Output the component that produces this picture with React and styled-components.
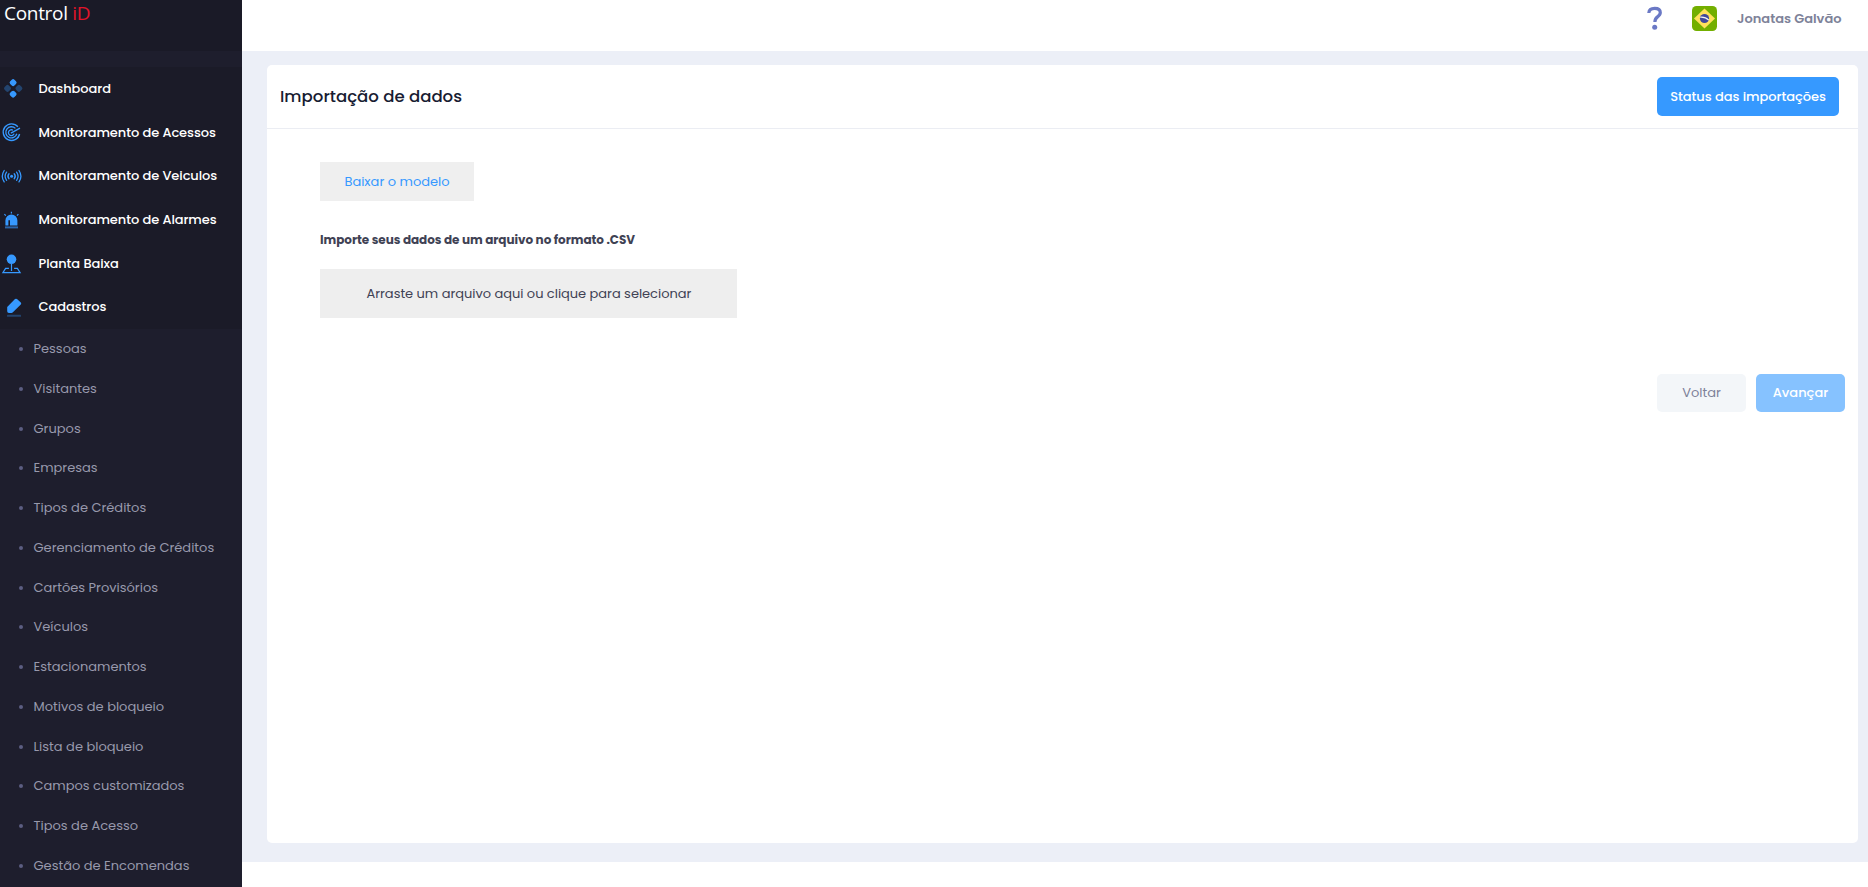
import React, { useState } from "react";
import styled, { createGlobalStyle } from "styled-components";

const colors = {
  white: "#ffffff",
  sidebar: "#1e1e2d",
  brand: "#1a1a27",
  menu: "#1b1b28",
  menuSub: "#9899ac",
  dot: "#5c5e81",
  primary: "#3699ff",
  primaryDark: "#23446e",
  primaryLight: "#86c2ff",
  page: "#eceff7",
  border: "#ebedf3",
  gray: "#efefef",
  light: "#f3f6f9",
  muted: "#7e8299",
  text: "#3f4254",
  title: "#181c32",
  red: "#e3142a",
};

const menuItems = [
  { label: "Dashboard", icon: DashboardIcon },
  { label: "Monitoramento de Acessos", icon: RadarIcon },
  { label: "Monitoramento de Veiculos", icon: SignalIcon },
  { label: "Monitoramento de Alarmes", icon: AlarmIcon },
  { label: "Planta Baixa", icon: PlanIcon },
  { label: "Cadastros", icon: PencilIcon },
];

const subItems = [
  "Pessoas",
  "Visitantes",
  "Grupos",
  "Empresas",
  "Tipos de Créditos",
  "Gerenciamento de Créditos",
  "Cartões Provisórios",
  "Veículos",
  "Estacionamentos",
  "Motivos de bloqueio",
  "Lista de bloqueio",
  "Campos customizados",
  "Tipos de Acesso",
  "Gestão de Encomendas",
];

export default function App() {
  const [isOpen, setIsOpen] = useState(true);
  return (
    <>
      <GlobalStyle />
      <StyledLayout>
        <StyledSidebar>
          <StyledBrand>
            Control <StyledBrandMark>iD</StyledBrandMark>
          </StyledBrand>
          <StyledMenu>
            {menuItems.map(({ label, icon: MenuIcon }) => (
              <StyledMenuItem
                key={label}
                onClick={
                  label === "Cadastros" ? () => setIsOpen(!isOpen) : undefined
                }
              >
                <MenuIcon />
                {label}
              </StyledMenuItem>
            ))}
          </StyledMenu>
          {isOpen && (
            <StyledSubMenu>
              {subItems.map((label) => (
                <StyledSubItem key={label}>{label}</StyledSubItem>
              ))}
            </StyledSubMenu>
          )}
        </StyledSidebar>
        <StyledContent>
          <StyledHeader>
            <HelpIcon />
            <FlagIcon />
            <StyledUser>Jonatas Galvão</StyledUser>
          </StyledHeader>
          <StyledMain>
            <StyledCard>
              <StyledCardHeader>
                <StyledTitle>Importação de dados</StyledTitle>
                <StyledStatusButton>Status das importações</StyledStatusButton>
              </StyledCardHeader>
              <StyledCardBody>
                <StyledDownload>Baixar o modelo</StyledDownload>
                <StyledLabel>
                  Importe seus dados de um arquivo no formato .CSV
                </StyledLabel>
                <StyledDropzone>
                  Arraste um arquivo aqui ou clique para selecionar
                </StyledDropzone>
              </StyledCardBody>
              <StyledActions>
                <StyledBackButton>Voltar</StyledBackButton>
                <StyledNextButton disabled>Avançar</StyledNextButton>
              </StyledActions>
            </StyledCard>
          </StyledMain>
        </StyledContent>
      </StyledLayout>
    </>
  );
}

function DashboardIcon() {
  return (
    <StyledIcon viewBox="0 0 24 24">
      <g fill={colors.primary}>
        <rect x="10.1" y="2.6" width="6" height="6" rx="1.9" transform="rotate(45 13.1 5.6)" />
        <rect x="10.1" y="14.2" width="6" height="6" rx="1.9" transform="rotate(45 13.1 17.2)" />
      </g>
      <g fill={colors.primaryDark}>
        <rect x="4.5" y="8.4" width="6" height="6" rx="1.9" transform="rotate(45 7.5 11.4)" />
        <rect x="15.9" y="8.4" width="6" height="6" rx="1.9" transform="rotate(45 18.9 11.4)" />
      </g>
    </StyledIcon>
  );
}

function RadarIcon() {
  return (
    <StyledIcon viewBox="0 0.4 24 24" fill="none" stroke={colors.primary} strokeWidth="1.35">
      <path d="M17.9 6.2A8.3 8.3 0 1 0 19.6 13.4" />
      <path d="M15.4 7.8A5.6 5.6 0 1 0 16.8 13.2" />
      <path d="M12.9 9.6A2.9 2.9 0 1 0 14.1 13" />
      <path d="M11.4 12.2 20 7.6" />
      <path d="M17.3 17.6 18.6 16" />
      <circle cx="11.4" cy="12.2" r="0.8" fill={colors.primary} stroke="none" />
    </StyledIcon>
  );
}

function SignalIcon() {
  return (
    <StyledIcon viewBox="0 0.5 24 24" fill="none" stroke={colors.primary} strokeWidth="1.3" strokeLinecap="round">
      <circle cx="11.6" cy="12.7" r="1.5" fill={colors.primary} stroke="none" />
      <path d="M9 10.2a3.8 3.8 0 0 0 0 5M14.2 10.2a3.8 3.8 0 0 1 0 5" />
      <path d="M6.6 8.6a7 7 0 0 0 0 8.2M16.6 8.6a7 7 0 0 1 0 8.2" />
      <path d="M4.2 7a10.2 10.2 0 0 0 0 11.4M19 7a10.2 10.2 0 0 1 0 11.4" />
    </StyledIcon>
  );
}

function AlarmIcon() {
  return (
    <StyledIcon viewBox="0 0.6 24 24">
      <path
        d="M5.4 18.2V13a6 6 0 0 1 12 0v5.2H10v-5.4H8.4v5.4z"
        fill={colors.primary}
      />
      <rect x="5" y="19" width="13" height="2" fill="#2b66ab" />
      <path
        d="M11.4 4.4v1.8M4.4 6.8l1.4 1.4M18.4 6.8 17 8.2"
        stroke={colors.primary}
        strokeWidth="1.2"
      />
    </StyledIcon>
  );
}

function PlanIcon() {
  return (
    <StyledIcon viewBox="0 0 24 24">
      <circle cx="11.5" cy="7.3" r="4.8" fill={colors.primary} />
      <path
        d="M11.5 12v7M8.9 16.4H5.6L2.9 20.6h17.2l-2.7-4.2h-3.3"
        fill="none"
        stroke={colors.primary}
        strokeWidth="1.2"
      />
    </StyledIcon>
  );
}

function PencilIcon() {
  return (
    <StyledIcon viewBox="0 0 24 24">
      <path
        d="M7.2 16.2V12l7.8-7.9q1-.9 2 0l3.8 3.4q.9.9 0 1.9l-7.9 7.8q-.6.7-1.4.7H8.9q-1.7 0-1.7-1.7z"
        fill={colors.primary}
      />
      <rect x="7" y="19.7" width="14" height="2" rx="0.5" fill={colors.primaryDark} />
    </StyledIcon>
  );
}

function HelpIcon() {
  return (
    <StyledHelp viewBox="0 0 16 24">
      <path
        d="M1.8 7C2 3.9 4.4 2.4 7.7 2.4c3.6 0 5.6 1.7 5.6 4.2 0 2-1 3-2.8 4.3-1.8 1.3-2.6 2.3-2.6 5"
        fill="none"
        stroke="#6b79c5"
        strokeWidth="3.2"
      />
      <circle cx="7.7" cy="21.2" r="2.5" fill="#6b79c5" />
    </StyledHelp>
  );
}

function FlagIcon() {
  return (
    <StyledFlag viewBox="0 0 25 25">
      <rect width="25" height="25" rx="4.5" fill="#73af00" />
      <path d="M12.5 2.4 23 12.5 12.5 22.6 2 12.5z" fill="#ffe15a" />
      <circle cx="12.5" cy="12.5" r="4.6" fill="#41479b" />
      <path d="M8.2 11.2q5-.6 8.6 3" fill="none" stroke="#f5f5f5" strokeWidth="1.1" />
    </StyledFlag>
  );
}

const GlobalStyle = createGlobalStyle`
  * {
    box-sizing: border-box;
  }
  body {
    margin: 0;
    background-color: ${colors.white};
    color: ${colors.text};
    font-family: Poppins, Inter, "Liberation Sans", sans-serif;
    font-size: 13px;
    overflow: hidden;
  }
  button {
    border: 0;
    padding: 0;
    font: inherit;
  }
`;
const StyledLayout = styled.div`
  display: flex;
  height: 100vh;
  overflow: hidden;
`;
const StyledSidebar = styled.aside`
  display: flex;
  flex-direction: column;
  flex-shrink: 0;
  width: 242px;
  overflow: hidden;
  background-color: ${colors.sidebar};
`;
const StyledBrand = styled.div`
  flex-shrink: 0;
  height: 51px;
  padding: 0 4px;
  background-color: ${colors.brand};
  color: ${colors.white};
  font-family: "Open Sans", sans-serif;
  font-size: 19px;
  line-height: 27px;
  letter-spacing: -0.3px;
`;
const StyledBrandMark = styled.span`
  color: ${colors.red};
`;
const StyledMenu = styled.ul`
  flex-shrink: 0;
  margin: 16.3px 0 0;
  padding: 0;
  list-style: none;
  background-color: ${colors.menu};
`;
const StyledMenuItem = styled.li`
  display: flex;
  align-items: center;
  gap: 14.5px;
  height: 43.67px;
  color: ${colors.white};
  font-weight: 500;
  letter-spacing: -0.08px;
  white-space: nowrap;
  cursor: pointer;
`;
const StyledIcon = styled.svg`
  flex-shrink: 0;
  width: 24px;
  height: 24px;
`;
const StyledSubMenu = styled.ul`
  margin: 0;
  padding: 0;
  list-style: none;
`;
const StyledSubItem = styled.li`
  display: flex;
  align-items: center;
  gap: 10.5px;
  height: 39.75px;
  padding-left: 19px;
  color: ${colors.menuSub};
  white-space: nowrap;
  cursor: pointer;
  &::before {
    content: "";
    width: 4px;
    height: 4px;
    border-radius: 50%;
    background-color: ${colors.dot};
  }
`;
const StyledContent = styled.div`
  flex: 1;
  display: flex;
  flex-direction: column;
`;
const StyledHeader = styled.header`
  display: flex;
  justify-content: flex-end;
  align-items: flex-start;
  height: 51px;
  padding: 6px 26.5px 0 0;
`;
const StyledHelp = styled.svg`
  width: 16px;
  height: 24px;
  margin-right: 29px;
`;
const StyledFlag = styled.svg`
  width: 25px;
  height: 25px;
  margin-right: 20px;
`;
const StyledUser = styled.span`
  color: ${colors.muted};
  font-weight: 600;
  line-height: 25px;
`;
const StyledMain = styled.main`
  height: 811px;
  padding: 14px 10px 19px 25px;
  background-color: ${colors.page};
`;
const StyledCard = styled.section`
  height: 100%;
  border-radius: 5px;
  background-color: ${colors.white};
`;
const StyledCardHeader = styled.div`
  display: flex;
  align-items: center;
  justify-content: space-between;
  height: 64px;
  padding: 0 19px 0 13px;
  border-bottom: 1px solid ${colors.border};
`;
const StyledTitle = styled.h3`
  margin: 0;
  color: ${colors.title};
  font-size: 16.575px;
  font-weight: 500;
`;
const StyledButton = styled.button`
  display: flex;
  align-items: center;
  justify-content: center;
  border-radius: 5px;
  cursor: pointer;
`;
const StyledStatusButton = styled(StyledButton)`
  width: 182px;
  height: 39px;
  background-color: ${colors.primary};
  color: ${colors.white};
  font-weight: 500;
  letter-spacing: -0.05px;
`;
const StyledCardBody = styled.div`
  padding: 33px 53px 0;
`;
const StyledDownload = styled(StyledButton)`
  width: 154px;
  height: 39px;
  border-radius: 0;
  background-color: ${colors.gray};
  color: ${colors.primary};
`;
const StyledLabel = styled.p`
  margin: 30px 0 20px;
  font-size: 12px;
  font-weight: 700;
  line-height: 18px;
  letter-spacing: -0.04px;
`;
const StyledDropzone = styled.div`
  display: flex;
  align-items: center;
  width: 417px;
  height: 49px;
  padding-left: 46.5px;
  background-color: #eeeeee;
  letter-spacing: -0.03px;
  white-space: nowrap;
  cursor: pointer;
`;
const StyledActions = styled.div`
  display: flex;
  justify-content: flex-end;
  gap: 10px;
  margin-top: 56px;
  padding-right: 13px;
`;
const StyledBackButton = styled(StyledButton)`
  width: 89px;
  height: 38px;
  background-color: ${colors.light};
  color: ${colors.muted};
`;
const StyledNextButton = styled(StyledButton)`
  width: 89px;
  height: 38px;
  background-color: ${colors.primaryLight};
  color: ${colors.white};
  font-weight: 500;
`;
